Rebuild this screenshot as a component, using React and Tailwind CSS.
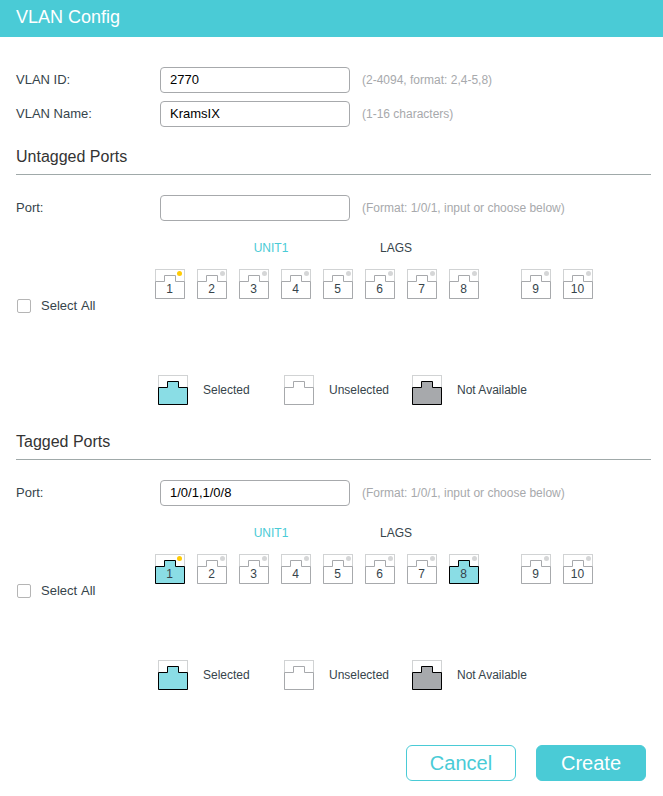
import React, { useState } from "react";

const HOUSING = "M.5 12.5H9.5V6.5H20.5V12.5H29.5V29.5H.5Z";

const STYLES = {
  selected: { fill: "#8adde5", stroke: "#000000" },
  unselected: { fill: "#ffffff", stroke: "#a7a9ac" },
  unavailable: { fill: "#a7a9ac", stroke: "#000000" },
};

function Jack({ state = "unselected", led, ledX = 25.5 }) {
  const { fill, stroke } = STYLES[state];
  return (
    <svg className="block" width="30" height="30" viewBox="0 0 30 30">
      <rect x=".5" y=".5" width="29" height="29" fill="#fff" stroke="#d1d3d4" />
      {led && <circle cx={ledX} cy="4.5" r="2.5" fill={led} />}
      <path d={HOUSING} fill={fill} stroke={stroke} />
    </svg>
  );
}

function Port({ number, selected, onToggle }) {
  const active = number === 1;
  return (
    <button type="button" onClick={onToggle} className="grid h-[30px] w-[30px] shrink-0">
      <span className="col-start-1 row-start-1">
        <Jack
          state={selected ? "selected" : "unselected"}
          led={active ? "#ffcb05" : "#d5d6d7"}
          ledX={active ? 24.5 : 25.5}
        />
      </span>
      <span className="z-10 col-start-1 row-start-1 pt-[13px] pr-px text-center text-[12px] leading-[14px]">{number}</span>
    </button>
  );
}

function Field({ label, value, hint }) {
  return (
    <div className="flex h-[26px] items-center">
      <label className="w-36 text-[13px] leading-[26px]">{label}</label>
      <input
        aria-label={label}
        defaultValue={value}
        className="h-[26px] w-[190px] rounded-[4px] border border-[#a7a9ac] bg-white px-[9px] pb-0.5 text-[13px] text-black outline-none"
      />
      <span className="ml-3 text-[12px] leading-[26px] text-[#a7a9ac]">{hint}</span>
    </div>
  );
}

function LegendItem({ state, children, className }) {
  return (
    <div className={"flex items-center gap-[15px] " + className}>
      <Jack state={state} />
      <span className="text-[12px] leading-[30px]">{children}</span>
    </div>
  );
}

function PortSection({ title, value, initial }) {
  const [picked, setPicked] = useState(initial);
  const toggle = (n) => setPicked(picked.includes(n) ? picked.filter((p) => p !== n) : [...picked, n]);
  const ports = (numbers) =>
    numbers.map((n) => <Port key={n} number={n} selected={picked.includes(n)} onToggle={() => toggle(n)} />);

  return (
    <section className="h-[285px]">
      <h2 className="mb-5 h-9 border-b border-[#a0a9a9] text-[16px] leading-[35px] text-[#333333]">{title}</h2>
      <Field label="Port:" value={value} hint="(Format: 1/0/1, input or choose below)" />
      <div className="mt-[17px] flex h-5 pl-[192px] text-center text-[12px] leading-5">
        <span className="w-[126px] text-[#4acbd6]">UNIT1</span>
        <span className="w-[124px]">LAGS</span>
      </div>
      <div className="mt-[11px] flex h-[106px]">
        <label className="mt-[29px] ml-px flex h-4 w-[138px] items-center gap-2.5 text-[13px] leading-4 [word-spacing:1px]">
          <input
            type="checkbox"
            className="h-3.5 w-3.5 appearance-none rounded-[2px] border border-[#b5b5b5] bg-white checked:bg-[#4acbd6]"
          />
          Select All
        </label>
        <div className="flex gap-3">{ports([1, 2, 3, 4, 5, 6, 7, 8])}</div>
        <div className="ml-[42px] flex gap-3">{ports([9, 10])}</div>
      </div>
      <div className="flex h-[30px] pl-[142px]">
        <LegendItem state="selected" className="w-[126px]">Selected</LegendItem>
        <LegendItem state="unselected" className="w-32">Unselected</LegendItem>
        <LegendItem state="unavailable" className="w-36">Not Available</LegendItem>
      </div>
    </section>
  );
}

export default function App() {
  return (
    <div className="h-[796px] w-[663px] overflow-hidden bg-white font-['Liberation_Sans',Arial,sans-serif] text-[#36444b]">
      <header className="h-[37px] bg-[#4acbd6] pl-4 text-[18px] leading-[34px] text-white">VLAN Config</header>
      <main className="pt-[30px] pr-3 pl-4">
        <div className="mb-3 flex flex-col gap-2">
          <Field label="VLAN ID:" value="2770" hint="(2-4094, format: 2,4-5,8)" />
          <Field label="VLAN Name:" value="KramsIX" hint="(1-16 characters)" />
        </div>
        <PortSection title="Untagged Ports" value="" initial={[]} />
        <PortSection title="Tagged Ports" value="1/0/1,1/0/8" initial={[1, 8]} />
      </main>
      <footer className="mt-9 flex justify-end gap-5 pr-[17px] text-[20px] leading-[34px]">
        <button type="button" className="h-9 w-[110px] rounded-[6px] border border-[#4acbd6] bg-white text-[#4acbd6]">
          Cancel
        </button>
        <button type="button" className="h-9 w-[110px] rounded-[6px] border border-[#4acbd6] bg-[#4acbd6] text-white">
          Create
        </button>
      </footer>
    </div>
  );
}
